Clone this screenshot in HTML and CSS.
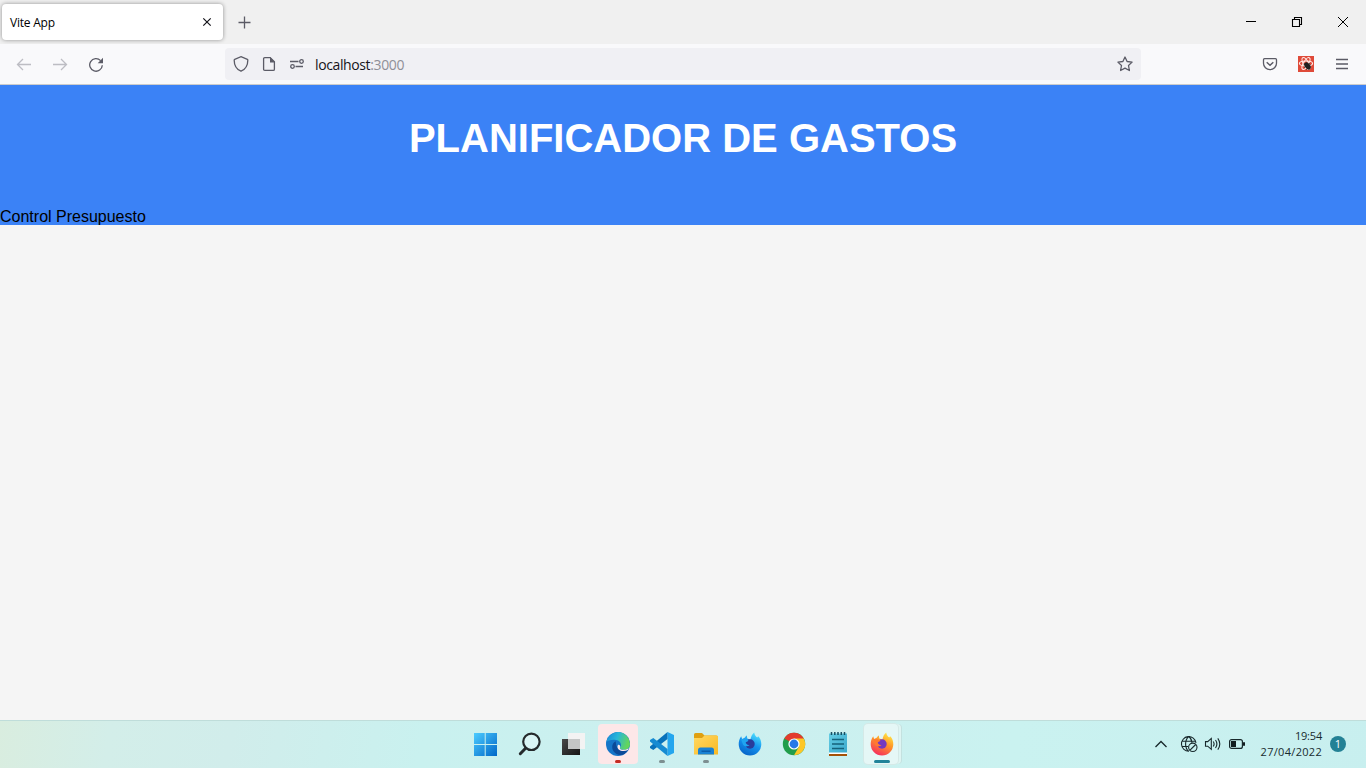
FILE: index.html
```html
<!DOCTYPE html>
<html lang="es">
<head>
<meta charset="utf-8">
<title>Vite App</title>
<link rel="stylesheet" href="styles.css">
</head>
<body>
<div class="tabbar">
  <div class="tab"><span class="tab-title">Vite App</span>
    <svg class="tab-close" width="16" height="16" viewBox="0 0 16 16"><path d="M4.3 4.3l7.4 7.4M11.7 4.3l-7.4 7.4" stroke="#15141a" stroke-width="1.2" fill="none"/></svg>
  </div>
  <svg class="new-tab" width="16" height="16" viewBox="0 0 16 16"><path d="M8.5 2.5v12M2.500 8.500h12" stroke="#5b5b66" stroke-width="1.300" fill="none"/></svg>
  <div class="window-controls">
    <svg width="46" height="44" viewBox="0 0 46 44"><path d="M18 21.500h10" stroke="#000"/></svg>
    <svg width="46" height="44" viewBox="0 0 46 44"><path d="M18.500 19.500h7v7h-7zM20.500 19.500v-2h7v7h-2" fill="none" stroke="#000" stroke-width="1.100"/></svg>
    <svg width="46" height="44" viewBox="0 0 46 44"><path d="M18 17l10 10M28 17l-10 10" stroke="#000" stroke-width="1"/></svg>
  </div>
</div>
<div class="toolbar">
  <div class="nav-buttons">
    <svg width="16" height="16" viewBox="0 0 16 16" fill="none" stroke="#bdbdc3" stroke-width="1.300"><path d="M15 8.500H1.500M7 3L1.500 8.500 7 14"/></svg>
    <svg width="16" height="16" viewBox="0 0 16 16" fill="none" stroke="#bdbdc3" stroke-width="1.300"><path d="M1 8.500h13.500M9 3l5.500 5.500L9 14"/></svg>
    <svg width="16" height="16" viewBox="0 0 16 16" fill="none" stroke="#5b5b66" stroke-width="1.300"><path d="M14.300 9.200A6.300 6.300 0 1 1 12.600 4.600"/><path d="M15 1.800v5.400H9.700z" fill="#5b5b66" stroke="none"/></svg>
  </div>
  <div class="urlbar">
    <svg width="16" height="16" viewBox="0 0 16 16" fill="none" stroke="#5b5b66" stroke-width="1.300"><path d="M8 .7L14.400 3.300q.5.2.4.9C14.800 9.500 12.500 13.300 8 15.200 3.500 13.300 1.200 9.500 1.200 4.200q0-.7.5-.9z"/></svg>
    <svg width="16" height="16" viewBox="0 0 16 16"><path d="M4 1.600h5.200l4.200 4.200v7.400q0 1.200-1.200 1.200H3.800q-1.200 0-1.200-1.200V2.800q0-1.200 1.200-1.200z" fill="none" stroke="#5b5b66" stroke-width="1.300"/><path d="M9 1v5.500h5z" fill="#5b5b66"/></svg>
    <svg width="16" height="16" viewBox="0 0 16 16" fill="none" stroke="#5b5b66" stroke-width="1.300"><path d="M1 5.500h8.500M6.500 10.500H14"/><circle cx="12.500" cy="5.500" r="1.800"/><circle cx="3.500" cy="10.500" r="1.800"/></svg>
    <span class="url">localhost<span class="port">:3000</span></span>
    <svg class="star" width="16" height="16" viewBox="0 0 16 16"><path d="M8 1l2.100 4.500 5 .6-3.600 3.400.9 5L8 12.100l-4.400 2.400.9-5L.9 6.100l5-.6z" fill="none" stroke="#5b5b66" stroke-width="1.300" stroke-linejoin="round"/></svg>
  </div>
  <div class="actions">
    <svg width="16" height="16" viewBox="0 0 16 16" fill="none" stroke="#5b5b66" stroke-width="1.300"><path d="M2.500 2.700h11q1 0 1 1V7.200a6.500 6.500 0 0 1-13 0V3.700q0-1 1-1z"/><path d="M4.700 6.300L8 9.300l3.300-3" stroke-width="1.500"/></svg>
    <svg width="16" height="16" viewBox="0 0 16 16"><path fill="#df4a39" d="M0 0h16v16H0z"/><g fill="none" stroke="#ffe9e5" stroke-width="1.100"><ellipse cx="8" cy="7.500" rx="6.600" ry="2.500"/><ellipse cx="8" cy="7.500" rx="6.600" ry="2.500" transform="rotate(60 8 7.500)"/><ellipse cx="8" cy="7.500" rx="6.600" ry="2.500" transform="rotate(120 8 7.500)"/></g><ellipse cx="9.500" cy="10" rx="2.600" ry="4" transform="rotate(-38 9.500 10)" fill="#202020"/><path d="M5.500 8l7 1M6 11.500l6-4.500M8 13.500l4.500-3" stroke="#202020" stroke-width=".8"/></svg>
    <svg width="16" height="16" viewBox="0 0 16 16"><path d="M2 3.500h12M2 8h12M2 12.500h12" stroke="#5b5b66" stroke-width="1.300"/></svg>
  </div>
</div>
<main class="page">
  <header class="page-header">
    <h1>Planificador de Gastos</h1>
    <div class="budget">Control Presupuesto</div>
  </header>
</main>
<footer class="taskbar">
  <svg width="0" height="0" class="defs"><defs>
    <linearGradient id="win" x2="1" y2="1"><stop stop-color="#4cccff"/><stop offset="1" stop-color="#0067c8"/></linearGradient>
    <linearGradient id="edgeTop" x2="1" y2=".3"><stop stop-color="#1784d8"/><stop offset=".5" stop-color="#29b6d8"/><stop offset="1" stop-color="#62d55d"/></linearGradient>
    <linearGradient id="folder" y2="1"><stop stop-color="#ffd863"/><stop offset="1" stop-color="#f9b923"/></linearGradient>
    <linearGradient id="fire" x1=".8" x2=".3" y2="1"><stop stop-color="#fff04a"/><stop offset=".45" stop-color="#ff9627"/><stop offset="1" stop-color="#f52b60"/></linearGradient>
    <linearGradient id="blueFire" x1=".8" x2=".3" y2="1"><stop stop-color="#54e8ff"/><stop offset=".5" stop-color="#1593ef"/><stop offset="1" stop-color="#0763c7"/></linearGradient>
    <linearGradient id="note" y2="1"><stop stop-color="#65cde4"/><stop offset="1" stop-color="#3aa9cc"/></linearGradient>
    <linearGradient id="dark" y2="1"><stop stop-color="#494949"/><stop offset="1" stop-color="#151515"/></linearGradient>
    <path id="fox" d="M12 23.500A11.300 11.300 0 0 1 .7 12.300C.7 9.700 1.300 6.800 3.200 4.200L4.100 7l2.500-1.200C7.700 4.600 8 3.900 8.800 3.500l.5 3 3.100.9C13 4.800 14 2.200 16.200.5c.3 2.300 1.200 3.500 3 5.100l1-1.400C22.500 6.500 23.300 9.500 23.300 12.300A11.300 11.300 0 0 1 12 23.500z"/>
  </defs></svg>
  <div class="apps">
    <div class="app"><svg width="24" height="24" viewBox="0 0 24 24"><path fill="url(#win)" d="M1 1h10.700v11H1zM12.700 1H24v11H12.700zM1 13h10.700v11H1zM12.700 13H24v11H12.700z"/></svg></div>
    <div class="app"><svg width="24" height="24" viewBox="0 0 24 24"><circle cx="14.400" cy="9.800" r="8.200" fill="#e4f9f8" fill-opacity=".6" stroke="#252a2c" stroke-width="2.200"/><path d="M8.600 16.200l-5.300 5.500" stroke="#252a2c" stroke-width="3" stroke-linecap="round"/></svg></div>
    <div class="app"><svg width="24" height="24" viewBox="0 0 24 24"><path fill="url(#dark)" d="M1 7h18v16H1z"/><path fill="#f3f3f3" d="M7 1h17v16H7z"/><path fill="#c4c6c6" d="M7 7h12v10H7z"/></svg></div>
    <div class="app alert"><svg width="24" height="24" viewBox="0 0 24 24"><circle cx="12" cy="12" r="12" fill="#1675c8"/><path fill="url(#edgeTop)" d="M.2 10A12 12 0 0 1 24 11.500c0 4-2.500 6.300-6 6.300-3 0-4.500-1-4-2.200 2.600-2.800.3-7.600-5.300-7.900C5 7.500 1.500 8.500.2 10z"/><path d="M9.700 9.200c-3.500 1.500-4.700 6.300-2.200 10 2.500 3.600 7 4.900 11 2.700L22.600 17.700c-3.600 2-7.600 1.700-9.800-.2-2.600-2.200-3-5.800-3.100-8.300z" fill="#0c4a98"/><path d="M14 15.700c-.6 1 1 2.100 4 2.100 1.900 0 3.600-.6 4.700-1.800l-.7 2c-3.500 1.600-7 1.200-9-.3-1.600-1.300-2.100-3.400-.9-5 1.300-.3 2.700 1 1.900 3z" fill="#fde7e8"/></svg><i class="dot red"></i></div>
    <div class="app"><svg width="24" height="24" viewBox="0 0 24 24"><path d="M17.500 0L24 3v18l-6.500 3z" fill="#24a6ee"/><path d="M17.500 0v7L3.300 18 0 16v-1.500z" fill="#0872bb"/><path d="M0 9.500V8l3.300-2 14.200 11v7z" fill="#168bd2"/></svg><i class="dot"></i></div>
    <div class="app"><svg width="24" height="24" viewBox="0 0 24 24"><path fill="#dfa012" d="M0 2.500Q0 1 1.500 1H8l2.500 2.500H22q2 0 2 2V10H0z"/><path fill="url(#folder)" d="M0 6h8l2.500-2.500H23l1 1v18H0z"/><path fill="#1982d3" d="M4 22.500v-4.500q0-2.500 2.500-2.500h11Q20 15.500 20 18v4.500z"/><path fill="#0b5daa" d="M7.500 18.500h9V20h-9z"/></svg><i class="dot"></i></div>
    <div class="app"><svg width="24" height="24" viewBox="0 0 24 24"><use href="#fox" fill="url(#blueFire)"/><circle cx="12" cy="12" r="4.700" fill="#293c9b"/><path d="M3 7c4 .4 5 0 7.500 1.500-.7 1.200-2.500 1.200-3 2.200 1.500 2.300 2.500 2.300 4 2.500-2 2-6 1.500-7-2z" fill="#20a5f0"/></svg></div>
    <div class="app"><svg width="24" height="24" viewBox="0 0 24 24"><circle cx="12" cy="12" r="11.200" fill="#219d4b"/><path d="M12 12L2.300 6.400A11.200 11.200 0 0 1 21.700 6.400z" fill="#e33b2e"/><path d="M12 6.400h9.700A11.200 11.200 0 0 1 12 23.200l4.900-8.400z" fill="#fdc727"/><circle cx="12" cy="12" r="5.600" fill="#fff"/><circle cx="12" cy="12" r="4.400" fill="#2878e8"/></svg></div>
    <div class="app"><svg width="24" height="24" viewBox="0 0 24 24"><path fill="url(#note)" d="M3 1.500h18V21H3z"/><path d="M5.500 0v3M8.800 0v3M12 0v3M15.300 0v3M18.500 0v3" stroke="#164e62" stroke-width="1.500"/><path d="M6 7.500h12M6 12h12M6 16.500h12" stroke="#15627b" stroke-width="1.500"/><path fill="#fff" d="M3 20.500h18V22H3z"/><path fill="#a45208" d="M3 22h18v2H3z"/></svg></div>
    <div class="app active"><svg width="24" height="24" viewBox="0 0 24 24"><use href="#fox" fill="url(#fire)"/><circle cx="12" cy="12" r="4.700" fill="#7339bf"/><path d="M3 7c4 .4 5 0 7.500 1.500-.7 1.200-2.500 1.200-3 2.200 1.500 2.300 2.500 2.300 4 2.500-2 2-6 1.500-7-2z" fill="#ff7a30"/></svg><i class="dot current"></i></div>
  </div>
  <div class="tray">
    <svg width="14" height="16" viewBox="0 0 14 16"><path d="M1.500 11L7 5.500l5.500 5.500" fill="none" stroke="#17282b" stroke-width="1.300"/></svg>
    <svg class="net" width="18" height="18" viewBox="0 0 18 18" fill="none" stroke="#17282b" stroke-width="1.100"><path d="M9 16.200A7.300 7.300 0 1 1 16 7.800M2 6.300h13.800M2 11.500h6M8.800 1.500C4.500 5 4.500 13 8.800 16.400M8.800 1.500c2 1.500 3 4 3.200 6.300"/><circle cx="12.800" cy="12.300" r="4.200"/><path d="M10 15.200l5.700-5.700"/></svg>
    <svg class="volume" width="18" height="16" viewBox="0 0 18 16" fill="none" stroke="#17282b" stroke-width="1.100"><path d="M1.500 5.600h2.200L7.300 2.400v11L3.700 10.200H1.500z"/><path d="M9.200 5.500q1.800 2.500 0 5M11.500 4q2.800 4 0 8M13.800 2.400q4 5.600 0 11.200"/></svg>
    <svg class="battery" width="18" height="16" viewBox="0 0 18 16"><rect x="1.600" y="3.600" width="12.800" height="8.800" rx="2" fill="none" stroke="#17282b" stroke-width="1.200"/><path fill="#111c1e" d="M3 5h5v6H3zM15 6.300h2v3.400h-2z"/></svg>
    <div class="clock"><span class="time">19:54</span><span class="date">27/04/2022</span></div>
    <span class="badge">1</span>
  </div>
</footer>
</body>
</html>
```
FILE: styles.css
```css
* { box-sizing: border-box; }
body { margin: 0; width: 1366px; height: 768px; overflow: hidden; display: flex; flex-direction: column; font-family: "Open Sans", "Noto Sans", sans-serif; background: #f5f5f5; }
svg { display: block; flex: none; }
.tabbar { height: 44px; background: #f0f0f0; display: flex; flex: none; align-items: center; }
.tab { width: 221px; height: 36px; margin-left: 2px; padding: 0 8px; background: #fff; border-radius: 4px; box-shadow: 0 0 4px rgba(0,0,0,.4); display: flex; align-items: center; }
.tab-title { font-size: 12px; letter-spacing: -.22px; color: #000; }
.tab-close { margin-left: auto; }
.new-tab { margin-left: 13px; }
.window-controls { display: flex; margin-left: auto; }
.toolbar { height: 41px; flex: none; background: #f9f9fb; border-bottom: 1px solid #ccc; display: flex; align-items: center; }
.nav-buttons { display: flex; gap: 20px; width: 225px; padding-left: 16px; }
.urlbar { width: 916px; height: 32px; background: #f0f0f4; border-radius: 4px; padding: 0 8px; display: flex; align-items: center; gap: 12px; }
.url { font-size: 14px; letter-spacing: -.38px; color: #15141a; margin-left: -2px; }
.port { color: #8f8f98; }
.star { margin-left: auto; }
.actions { display: flex; gap: 20px; margin-left: auto; padding-right: 16px; }
.page { flex: 1; background: #f5f5f5; font-family: Arial, "Liberation Sans", sans-serif; }
.page-header { height: 140px; background: #3b82f6; display: flex; flex-direction: column; justify-content: space-between; }
.page-header h1 { margin: 0; padding-top: 30px; font-size: 40px; line-height: 46px; color: #fff; text-align: center; text-transform: uppercase; }
.budget { font-size: 16px; line-height: 16px; color: #000; }
.taskbar { position: relative; height: 48px; flex: none; border-top: 1px solid #bfddda; background: linear-gradient(100deg, #d9eddf 0, #d3eee9 110px, #d1edeb 230px, #c9f1ef 420px, #ccefef 700px, #caf2f0 1000px, #c8efef 1366px); display: flex; align-items: center; padding-bottom: 1px; }
.defs { position: absolute; }
.apps { display: flex; gap: 4px; margin-left: 465px; }
.app { position: relative; width: 40px; height: 40px; display: grid; place-items: center; border-radius: 4px; }
.apps .alert { background: #fde7e8; margin-left: 1px; }
.apps .active { width: 34px; margin-left: 2px; padding-left: 2px; background: #e5f7f6; box-shadow: 0 0 0 1px #d5e9e7, 3px 0 0 #dff5f3, 4px 0 0 #c4e1df; }
.dot { position: absolute; bottom: 1px; left: 17px; width: 6px; height: 3px; border-radius: 2px; background: #7d8f91; }
.red { background: #c52b23; }
.current { width: 16px; left: 10px; background: #218399; }
.tray { display: flex; align-items: center; margin-left: auto; padding-right: 20px; color: #122c30; }
.net { margin-left: 12px; }
.volume { margin-left: 6px; }
.battery { margin-left: 6px; }
.clock { width: 76px; display: flex; flex-direction: column; align-items: flex-end; font-size: 11px; line-height: 16px; color: #182b2e; }
.date { letter-spacing: .3px; }
.time { letter-spacing: -.2px; }
.badge { width: 16px; height: 16px; border-radius: 50%; margin-left: 8px; background: #238195; color: #fff; font-size: 11px; line-height: 16px; text-align: center; }
```
